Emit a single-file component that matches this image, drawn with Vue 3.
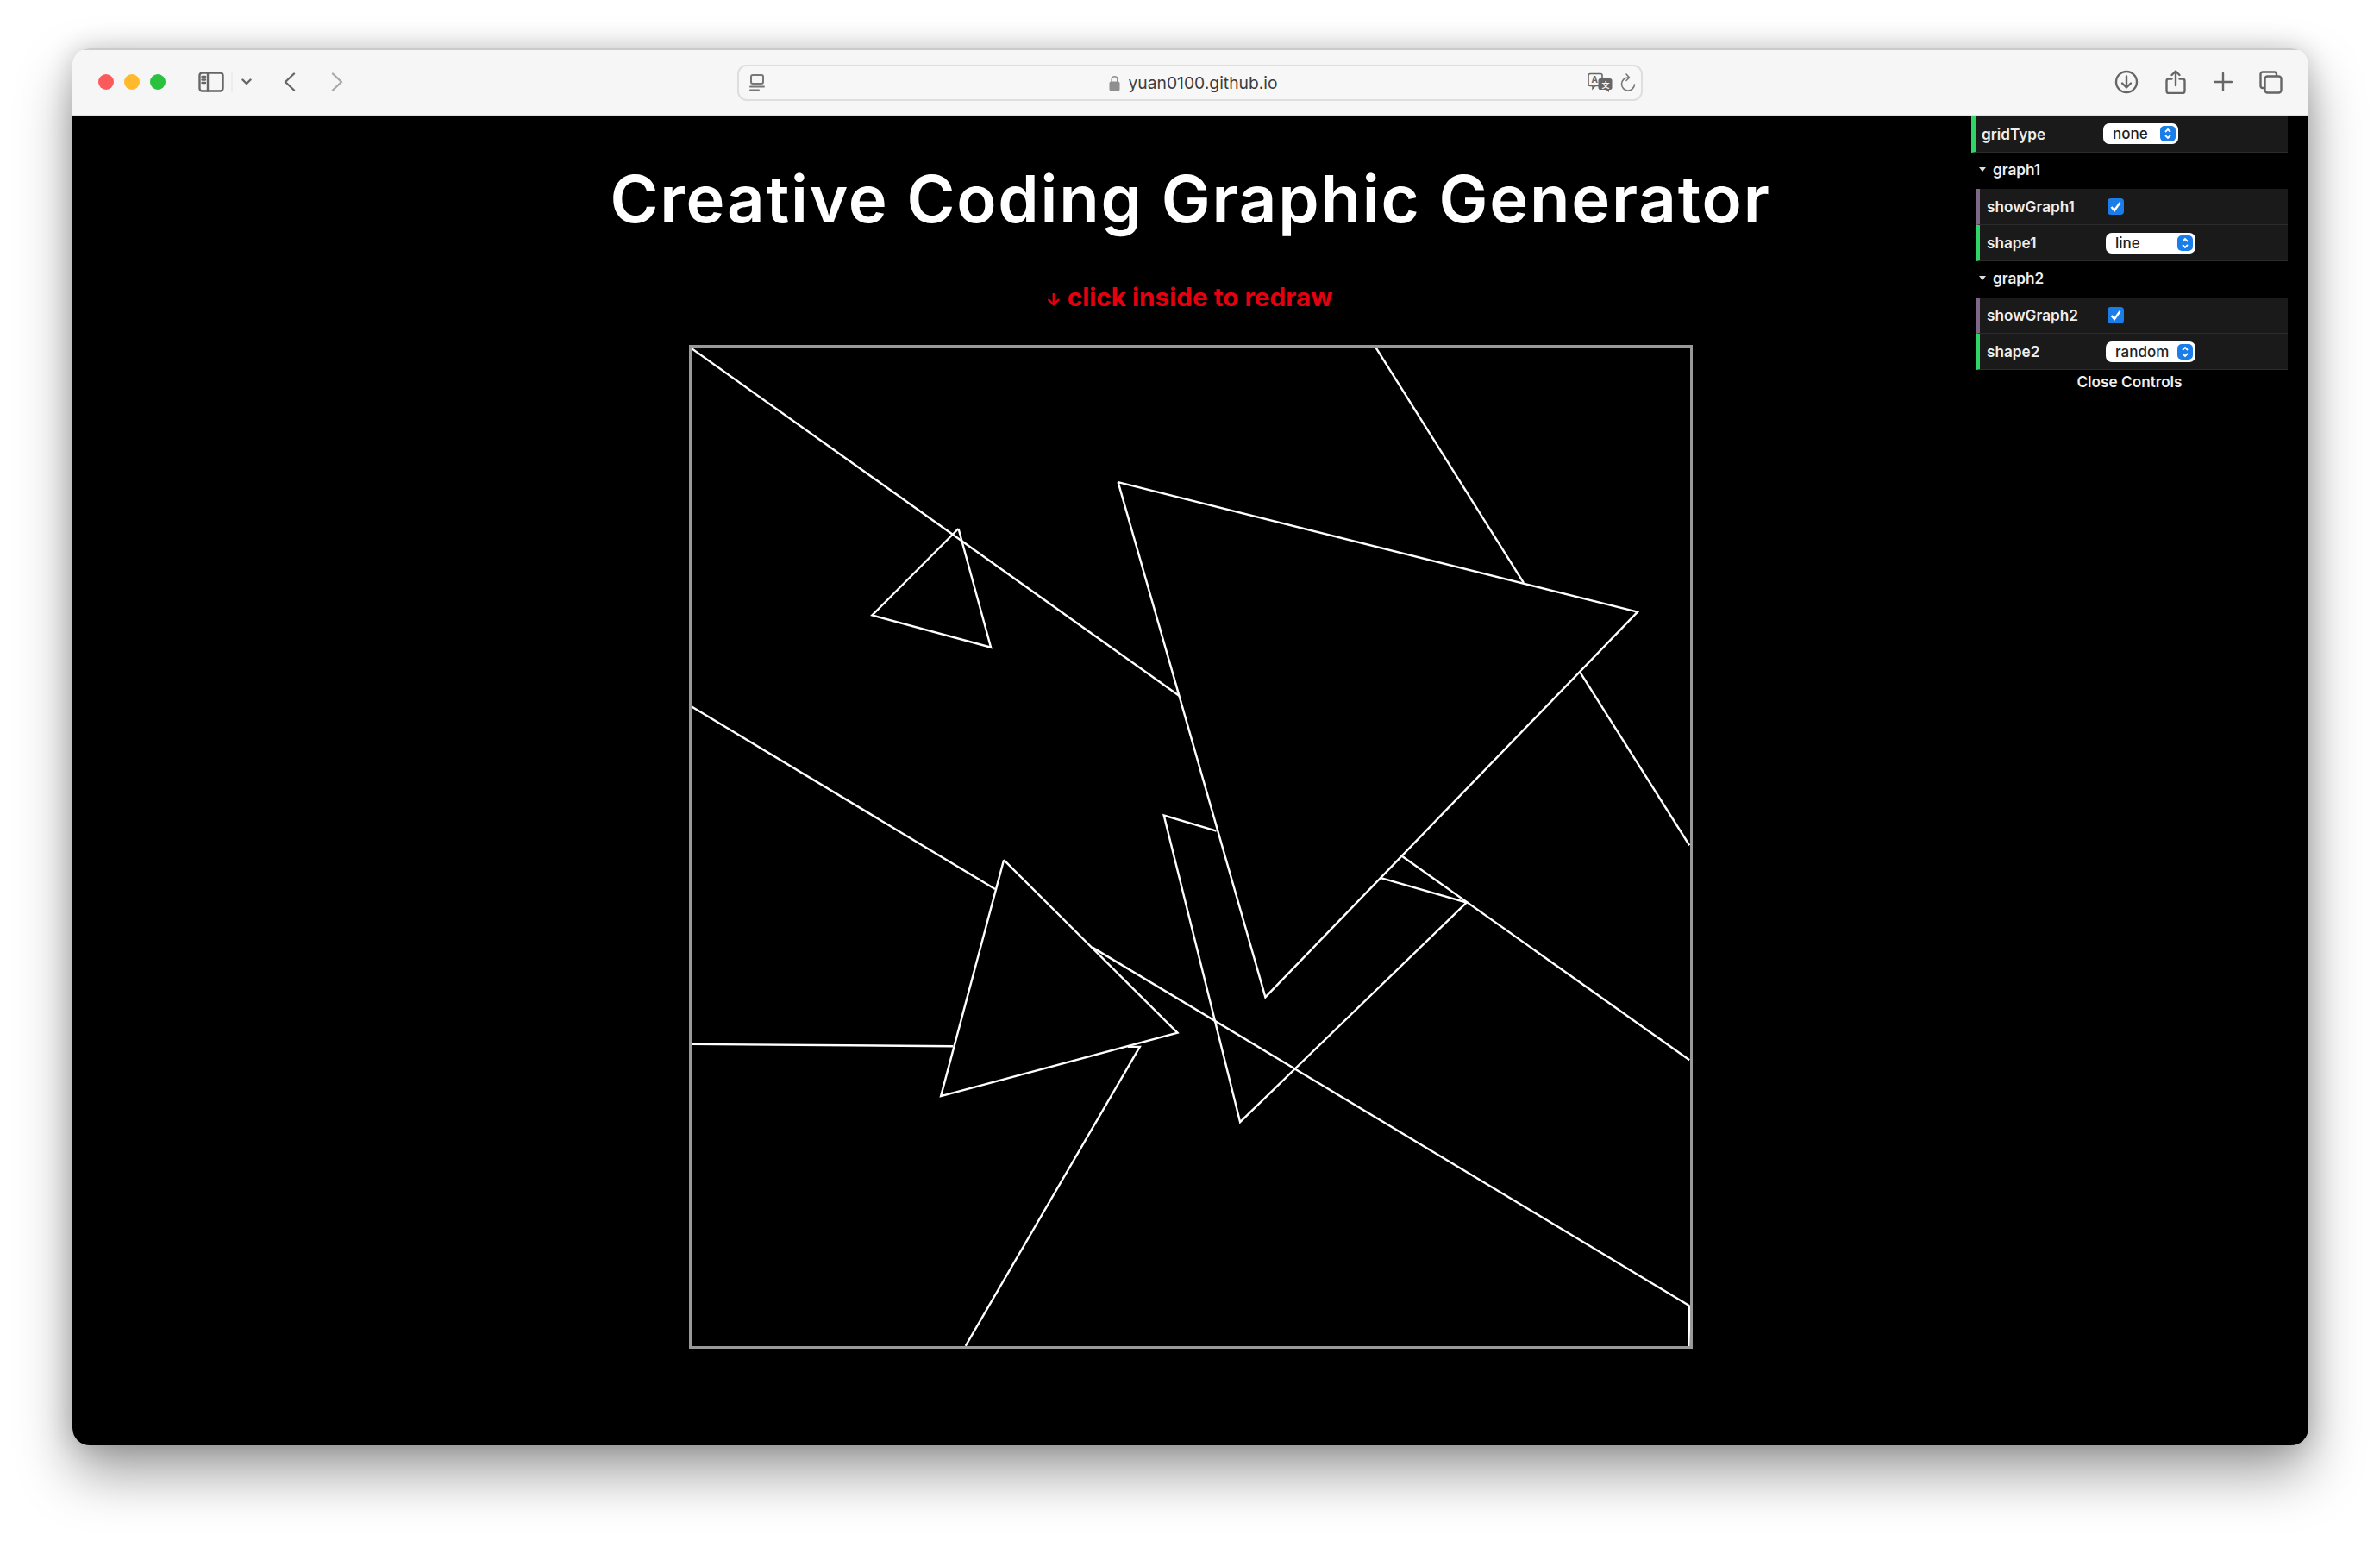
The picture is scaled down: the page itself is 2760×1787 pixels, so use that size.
<script setup>
const segments = [
  '800.5,402.4 1366.8,805.8',
  '1111,612 1010.9,712.5 1148.6,749.7 1111,612',
  '1296.1,558.2 1898.5,708.7 1466.9,1155.3 1296.1,558.2',
  '800.5,817.8 1153.5,1030',
  '1163.6,996.2 1365,1196.7 1090.6,1270.1 1163.6,996.2',
  '800.5,1209.9 1104.6,1212.2',
  '1307.4,1212.9 1321.3,1212.9 1119.2,1559.8',
  '1266,1097.4 1958.7,1513.2',
  '1594.5,401.3 1766.4,674.8',
  '1831.9,778.7 1958.7,979.3',
  '1410.1,962.7 1349.2,944.6 1437.6,1300.2 1700.2,1045.5 1600.1,1016.9',
  '1625.7,992 1958.7,1228.3',
  '1958.7,1513.2 1958,1560'
]

const groups = [
  { title: 'graph1', check: 'showGraph1', select: 'shape1', value: 'line' },
  { title: 'graph2', check: 'showGraph2', select: 'shape2', value: 'random' }
]
</script>

<template>
  <div class="page">
    <div class="window">
      <header class="toolbar">
        <div class="left-tools">
          <div class="lights">
            <span class="light red"></span>
            <span class="light yellow"></span>
            <span class="light green"></span>
          </div>
          <svg class="ico sidebar" width="30" height="24" viewBox="0 0 30 24">
            <rect x="1.5" y="1.5" width="27" height="21" rx="3" />
            <path d="M11 1.5v21M4.5 6h3.5M4.5 9.5h3.5M4.5 13h3.5" />
          </svg>
          <span class="divider"></span>
          <svg class="ico chevron" width="12" height="8" viewBox="0 0 12 8">
            <path d="M1.5 1.5 6 6l4.5-4.5" />
          </svg>
          <svg class="ico back" width="14" height="22" viewBox="0 0 14 22">
            <path d="M12 1.5 2 11l10 9.5" />
          </svg>
          <svg class="ico forward" width="14" height="22" viewBox="0 0 14 22">
            <path d="M2 1.5 12 11 2 20.5" />
          </svg>
        </div>

        <div class="address">
          <svg class="ico reader" width="18" height="20" viewBox="0 0 18 20">
            <rect x="2" y="1" width="14" height="10" rx="2" />
            <path d="M1 14.5h16M1 18.5h10" />
          </svg>
          <div class="url">
            <svg class="lock" width="13" height="19" viewBox="0 0 13 19">
              <path d="M3.2 8V5a3.3 3.3 0 0 1 6.6 0v3" fill="none" stroke="#8f8f8f" stroke-width="1.6" />
              <rect x="0.5" y="7.5" width="12" height="11" rx="2" fill="#8f8f8f" />
            </svg>
            <span>yuan0100.github.io</span>
          </div>
          <svg class="translate" width="30" height="24" viewBox="0 0 30 24">
            <path d="M3 1.5h12a2 2 0 0 1 2 2v10a2 2 0 0 1-2 2H9l-3 3v-3H3a2 2 0 0 1-2-2v-10a2 2 0 0 1 2-2z" fill="#f6f6f6" stroke="#666" stroke-width="1.6" />
            <text x="4.5" y="12" class="tr-a">A</text>
            <path d="M15 7h11a2.5 2.5 0 0 1 2.500 2.500v8a2.500 2.500 0 0 1-2.500 2.500h-1v3l-3.500-3H15a2.500 2.500 0 0 1-2.500-2.500v-8A2.500 2.500 0 0 1 15 7z" fill="#666" />
            <text x="16.500" y="17.500" class="tr-b">文</text>
          </svg>
          <svg class="ico reload" width="18" height="22" viewBox="0 0 18 22">
            <path d="M9 5a7.500 7.500 0 1 0 7.500 8" />
            <path d="M7 1l3.500 4L7 8.500" class="thin" />
          </svg>
        </div>

        <div class="right-tools">
          <svg class="ico" width="28" height="28" viewBox="0 0 28 28">
            <circle cx="14" cy="14" r="12" />
            <path d="M14 7.500v12.500M9 15.500l5 5 5-5" />
          </svg>
          <svg class="ico" width="24" height="28" viewBox="0 0 24 28">
            <path d="M7.500 10.500H4a2.500 2.500 0 0 0-2.500 2.500v11.500A2.500 2.500 0 0 0 4 27h16a2.500 2.500 0 0 0 2.500-2.500V13a2.500 2.500 0 0 0-2.500-2.500h-3.500" />
            <path d="M12 18V2M7.500 6 12 1.500 16.500 6" />
          </svg>
          <svg class="ico" width="22" height="22" viewBox="0 0 22 22">
            <path d="M11 1v20M1 11h20" />
          </svg>
          <svg class="ico" width="27" height="27" viewBox="0 0 27 27">
            <path d="M5.500 20H4a2.500 2.500 0 0 1-2.500-2.500V4A2.500 2.500 0 0 1 4 1.500h13.500A2.500 2.500 0 0 1 20 4v1.500" />
            <rect x="6.500" y="6.500" width="19" height="19" rx="3" />
          </svg>
        </div>
      </header>

      <main class="content">
        <h1 class="title">Creative Coding Graphic Generator</h1>
        <p class="hint"><span class="arrow">↓</span> click inside to redraw</p>
        <svg class="canvas" viewBox="801.5 402 1158 1158">
          <polyline v-for="(s, i) in segments" :key="i" :points="s" />
        </svg>

        <aside class="panel">
          <div class="row string">
            <span class="label">gridType</span>
            <div class="select small"><span>none</span><i class="arrows"><svg width="10" height="14" viewBox="0 0 10 14"><path d="M2 5l3-3 3 3M2 9l3 3 3-3" /></svg></i></div>
          </div>
          <section v-for="g in groups" :key="g.title" class="group">
            <div class="group-title"><span class="caret"></span>{{ g.title }}</div>
            <div class="row boolean nested">
              <span class="label">{{ g.check }}</span>
              <span class="checkbox"><svg width="15" height="15" viewBox="0 0 15 15"><path d="M2.500 8l3.500 4 6.500-9" /></svg></span>
            </div>
            <div class="row string nested">
              <span class="label">{{ g.select }}</span>
              <div class="select wide"><span>{{ g.value }}</span><i class="arrows"><svg width="10" height="14" viewBox="0 0 10 14"><path d="M2 5l3-3 3 3M2 9l3 3 3-3" /></svg></i></div>
            </div>
          </section>
          <div class="close">Close Controls</div>
        </aside>
      </main>
    </div>
  </div>
</template>

<style>
html, body { margin: 0; background: #fff; }
</style>

<style scoped>
.page {
  box-sizing: border-box;
  width: 2760px;
  height: 1787px;
  padding: 56px 83px 111px 84px;
  background: #fff;
  overflow: hidden;
}
.window {
  height: 100%;
  display: flex;
  flex-direction: column;
  border-radius: 20px;
  overflow: hidden;
  box-shadow: 0 32px 64px rgba(0, 0, 0, 0.38), 0 0 30px rgba(0, 0, 0, 0.18);
}
.toolbar {
  box-sizing: border-box;
  height: 78.5px;
  flex: none;
  display: flex;
  align-items: center;
  position: relative;
  background: #f6f6f6;
  border-top: 2px solid #cbcbcb;
  border-bottom: 2px solid #e2e2e2;
}
.left-tools {
  display: flex;
  align-items: center;
  padding-left: 30px;
}
.lights { display: flex; gap: 12px; margin-right: 38px; }
.light { width: 18px; height: 18px; border-radius: 50%; }
.red { background: #fb5a5c; }
.yellow { background: #feb92d; }
.green { background: #2ac13f; }
.ico { fill: none; stroke: #666; stroke-width: 2.4; stroke-linecap: round; stroke-linejoin: round; }
.ico .thin { stroke-width: 1.6; }
.divider { width: 2px; height: 24px; margin: 0 10px 0 8px; background: #ececec; }
.chevron { margin-right: 37px; }
.back { margin-right: 41px; }
.forward { stroke: #a9a9a9; }
.address {
  position: absolute;
  left: 771px;
  top: 17px;
  box-sizing: border-box;
  width: 1050px;
  height: 42px;
  display: flex;
  align-items: center;
  padding: 0 6px 0 12px;
  border: 2px solid #dedede;
  border-radius: 11px;
  background: #f7f7f7;
}
.reader { stroke-width: 2; stroke: #777; flex: none; }
.url {
  flex: 1;
  display: flex;
  align-items: center;
  justify-content: center;
  gap: 9px;
  padding-left: 40px;
  font: 400 19.3px "Inter", "Liberation Sans", sans-serif;
  color: #3d3d3d;
}
.tr-a { font: 700 10px "Inter", sans-serif; fill: #666; }
.tr-b { font: 700 9px "Noto Sans CJK SC", sans-serif; fill: #f6f6f6; }
.reload { margin-left: 8px; stroke-width: 1.6; stroke: #777; }
.right-tools {
  margin-left: auto;
  padding-right: 30px;
  display: flex;
  align-items: center;
  gap: 31.5px;
}
.content {
  flex: 1;
  position: relative;
  display: flex;
  flex-direction: column;
  align-items: center;
  background: #000;
}
.title {
  margin: 45.5px 0 0;
  font: 600 76px/100px "Inter", "Liberation Sans", sans-serif;
  letter-spacing: 1.8px;
  color: #fff;
  white-space: nowrap;
}
.hint {
  margin: 44px 0 0 -3px;
  font: 700 29.7px/40px "Inter", "Liberation Sans", sans-serif;
  color: #e5000f;
}
.arrow { font-size: 20px; }
.canvas {
  box-sizing: border-box;
  display: block;
  width: 1164px;
  height: 1164px;
  margin-top: 31.5px;
  border: 3px solid #999;
  flex: none;
}
.canvas polyline {
  fill: none;
  stroke: #fff;
  stroke-width: 2.4;
}
.panel {
  position: absolute;
  top: 0;
  right: 24px;
  width: 367px;
  font: 600 17.2px "Inter", "Liberation Sans", sans-serif;
  color: #eee;
}
.row {
  box-sizing: border-box;
  height: 42px;
  display: flex;
  align-items: center;
  background: #1a1a1a;
  border-bottom: 1px solid #2c2c2c;
  border-left: 5px solid #2fd566;
  padding-left: 7px;
}
.row.nested { margin-left: 6px; border-left-width: 4px; padding-left: 8px; }
.row.boolean { border-left-color: #806787; }
.label { width: 141px; flex: none; }
.nested .label { width: 138px; }
.select {
  box-sizing: border-box;
  height: 24px;
  display: flex;
  align-items: center;
  justify-content: space-between;
  padding: 0 3px 0 11px;
  background: #fff;
  border-radius: 7px;
  color: #222;
  font-weight: 500;
  font-size: 17px;
}
.select.small { width: 87px; }
.select.wide { width: 104px; margin-top: 1px; }
.arrows {
  width: 18px;
  height: 18px;
  display: flex;
  align-items: center;
  justify-content: center;
  border-radius: 5px;
  background: #1a7de8;
}
.arrows svg { fill: none; stroke: #fff; stroke-width: 1.8; }
.group-title {
  box-sizing: border-box;
  height: 42px;
  display: flex;
  align-items: center;
  padding: 0 0 2px 9px;
}
.caret {
  width: 0;
  height: 0;
  margin-right: 8px;
  border-style: solid;
  border-width: 5px 4px 0;
  border-color: #ddd transparent transparent;
}
.checkbox {
  width: 19px;
  height: 19px;
  margin-left: 2px;
  display: flex;
  align-items: center;
  justify-content: center;
  border-radius: 4px;
  background: #1a7de8;
}
.checkbox svg { fill: none; stroke: #fff; stroke-width: 2.4; }
.close {
  height: 28px;
  display: flex;
  align-items: center;
  justify-content: center;
}
</style>
